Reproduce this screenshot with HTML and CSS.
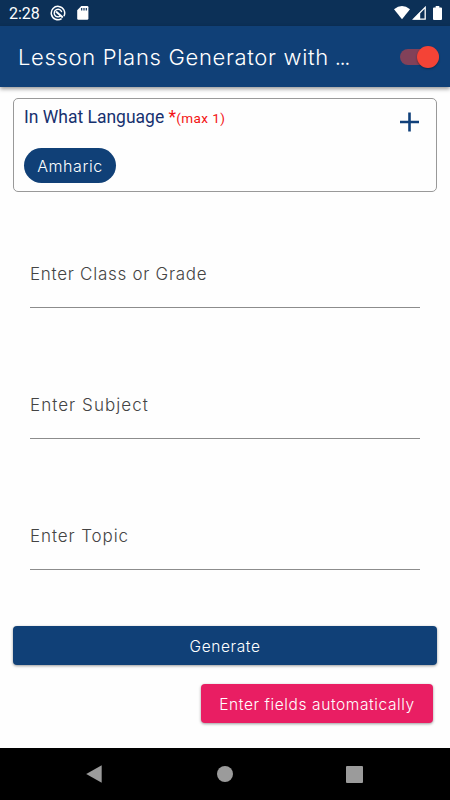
FILE: index.html
```
<!DOCTYPE html>
<html lang="en">

<head>
    <meta charset="utf-8">
    <meta name="viewport" content="width=device-width, initial-scale=1">
    <title>Lesson Plans Generator</title>
    <link rel="stylesheet" href="styles.css">
</head>

<body>

    <div class="status-bar">
        <span class="clock">2:28</span>
        <svg class="icon-app" width="16" height="16" viewBox="0 0 16 16">
            <path d="M11.6 13.7A6.7 6.7 0 1 1 13.9 11.2" fill="none" stroke="#fff" stroke-width="1.5"/>
            <path d="M10.6 10.8A3.8 3.8 0 1 1 11.7 7.2" fill="none" stroke="#fff" stroke-width="1.4"/>
            <path d="M6 6.4L12.8 12.4" stroke="#fff" stroke-width="2"/>
        </svg>
        <svg class="icon-sd" width="12" height="14" viewBox="0 0 12 14">
            <path d="M4.3 0H10.2Q11.4 0 11.4 1.2V12.6Q11.4 13.8 10.2 13.8H1.4Q.2 13.8 .2 12.6V4.2Z" fill="#fff"/>
            <path d="M4.7 2V4.4M7 2V4.4M9.3 2V4.4" stroke="#0c3057" stroke-width="1.2"/>
        </svg>
        <div class="signals">
            <svg width="16" height="14" viewBox="0 0 16 14">
                <path d="M0 3.2Q8-3 16 3.2L8 13.3Z" fill="#fff"/>
            </svg>
            <svg width="14" height="14" viewBox="0 0 14 14">
                <path d="M13.2 1.4V13.2H1.4Z" fill="none" stroke="#fff" stroke-width="1.3"/>
                <path d="M8.2 6L8.2 13.5H1Z" fill="#fff"/>
            </svg>
            <svg width="9" height="14" viewBox="0 0 9 14">
                <path d="M2.7 0H6.3V1.4H8Q9 1.4 9 2.4V13Q9 14 8 14H1Q0 14 0 13V2.4Q0 1.4 1 1.4H2.7Z" fill="#fff"/>
            </svg>
        </div>
    </div>

    <header class="app-bar">
        <h1 class="title">Lesson Plans Generator with <span class="dots">...</span></h1>
        <div class="switch"><span class="thumb"></span></div>
    </header>

    <main class="content">
        <section class="language-card">
            <div class="card-head">
                <div class="card-label">In What Language <span class="required">*</span><span class="limit">(max 1)</span></div>
                <svg class="plus" width="20" height="20" viewBox="0 0 20 20">
                    <path d="M9.5 .5V19.5M0 10H19" stroke="#10407a" stroke-width="2.6"/>
                </svg>
            </div>
            <span class="chip">Amharic</span>
        </section>

        <div class="fields">
            <div class="field field-class">Enter Class or Grade</div>
            <div class="field field-subject">Enter Subject</div>
            <div class="field field-topic">Enter Topic</div>
        </div>

        <div class="btn btn-generate">Generate</div>
        <div class="btn btn-auto">Enter fields automatically</div>
    </main>

    <nav class="nav-bar">
        <svg width="16" height="18" viewBox="0 0 16 18"><path d="M15.7 .2V17.8L.2 9Z" fill="#9b9b9b"/></svg>
        <svg width="16" height="16" viewBox="0 0 16 16"><circle cx="8" cy="8" r="8" fill="#9b9b9b"/></svg>
        <svg width="17" height="17" viewBox="0 0 17 17"><rect width="17" height="17" rx="1" fill="#9b9b9b"/></svg>
    </nav>

</body>

</html>
```
FILE: styles.css
```
* {
    box-sizing: border-box;
}

body {
    margin: 0;
    height: 800px;
    display: flex;
    flex-direction: column;
    overflow: hidden;
    background-color: #fefefe;
    font-family: Inter, "Liberation Sans", sans-serif;
    font-weight: 300;
}

svg {
    display: block;
    flex: none;
}

/* Status bar */
.status-bar {
    height: 26px;
    display: flex;
    align-items: center;
    padding: 0 8px;
    background-color: #0c3057;
    color: #fff;
}

.clock {
    width: 42px;
    padding-top: 2px;
    padding-left: 1px;
    font: 400 16px/20px Roboto, sans-serif;
}

.icon-sd {
    margin-left: 11px;
}

.signals {
    display: flex;
    gap: 2px;
    margin-left: auto;
}

.signals svg:last-child {
    margin-left: 5px;
}

/* App bar */
.app-bar {
    position: relative;
    height: 61px;
    display: flex;
    align-items: center;
    justify-content: space-between;
    padding: 0 11px 0 18px;
    background-color: #104077;
    box-shadow: 0 2px 4px rgba(0, 0, 0, .4);
}

.title {
    margin: 0;
    color: #fff;
    font-size: 22px;
    font-weight: 300;
    letter-spacing: .68px;
    white-space: nowrap;
}

.dots {
    margin-left: -1px;
    letter-spacing: -1.4px;
}

.switch {
    width: 39px;
    height: 16px;
    display: flex;
    align-items: center;
    justify-content: flex-end;
    border-radius: 8px;
    background-color: #824159;
}

.thumb {
    width: 22px;
    height: 22px;
    flex: none;
    border-radius: 50%;
    background-color: #f44336;
    box-shadow: 0 1px 2px rgba(0, 0, 0, .35);
}

/* Content */
.content {
    flex: 1;
    display: flex;
    flex-direction: column;
    padding: 11px 13px 0;
}

.language-card {
    height: 94px;
    padding: 7px 16px 0 10px;
    border: 1px solid #999;
    border-radius: 5px;
}

.card-head {
    height: 42px;
    display: flex;
    justify-content: space-between;
}

.card-label {
    font: 400 17.5px/22px Roboto, sans-serif;
    color: #17316f;
    white-space: nowrap;
}

.required,
.limit {
    color: #f31212;
}

.limit {
    font-size: 13.5px;
    letter-spacing: .45px;
}

.plus {
    margin-top: 6px;
}

.chip {
    display: flex;
    align-items: center;
    justify-content: center;
    width: 92px;
    height: 35px;
    border-radius: 18px;
    background-color: #104077;
    color: #fff;
    font-size: 16px;
    letter-spacing: .6px;
}

/* Text fields */
.fields {
    padding: 1px 17px 0;
}

.field {
    height: 131px;
    display: flex;
    align-items: flex-end;
    padding-bottom: 22px;
    border-bottom: 1px solid #8c8c8c;
    color: #444;
    font-size: 17px;
    line-height: 22px;
    white-space: nowrap;
}

.field-class {
    height: 115px;
    letter-spacing: .72px;
}

.field-subject {
    letter-spacing: 1.05px;
}

.field-topic {
    letter-spacing: .9px;
}

/* Buttons */
.btn {
    height: 39px;
    display: flex;
    align-items: center;
    justify-content: center;
    padding-top: 1px;
    border-radius: 4px;
    color: #fff;
    font-size: 15.5px;
    letter-spacing: .6px;
    box-shadow: 0 1px 3px rgba(0, 0, 0, .4);
    white-space: nowrap;
}

.btn-generate {
    margin-top: 56px;
    background-color: #104077;
}

.btn-auto {
    width: 232px;
    margin: 19px 4px 0 auto;
    background-color: #e91e63;
}

/* System navigation */
.nav-bar {
    height: 52px;
    display: flex;
    align-items: center;
    justify-content: space-between;
    padding: 0 87px 0 86px;
    background-color: #000;
}

.nav-bar svg:nth-child(2) {
    margin-left: 2px;
}
```
